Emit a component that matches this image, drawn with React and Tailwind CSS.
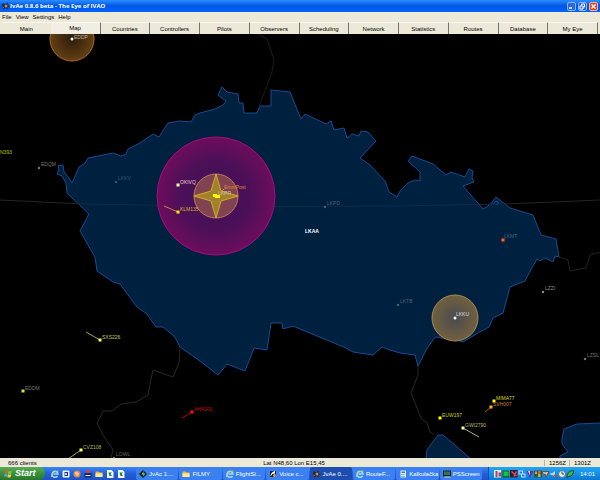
import React, { useState } from 'react';

const TABS = ['Main', 'Map', 'Countries', 'Controllers', 'Pilots', 'Observers', 'Scheduling', 'Network', 'Statistics', 'Routes', 'Database', 'My Eye'];

const LKAA_BORDER =
  '58,166 63,165 64,172 68,177 72,183 79,167 85,163 88,158 113,153 121,156 126,154 128,149 140,143 153,134 159,137 168,123 180,121 191,122 195,115 200,113 ' +
  '215,109 223,105 226,101 218,95 222,87 227,92 238,94 239,103 243,103 244,113 257,113 260,106 271,106 271,90 290,92 301,119 305,114 326,124 331,121 334,130 344,128 347,138 352,134 359,136 361,131 368,132 376,141 360,158 370,165 385,181 389,192 397,197 ' +
  '400,191 408,183 415,180 420,181 420,172 408,161 412,156 433,164 446,175 451,172 465,177 469,169 473,171 472,178 474,182 463,186 483,209 491,204 496,197 505,204 510,208 533,215 541,235 556,239 559,257 555,256 553,262 545,258 540,261 537,259 529,273 525,281 510,287 ' +
  '503,313 493,318 489,327 478,333 463,342 457,340 435,337 426,350 418,366 415,355 400,353 390,350 382,347 373,355 353,352 346,348 293,326 283,329 282,323 271,323 267,350 254,348 245,371 227,364 218,375 200,361 ' +
  '180,347 175,337 163,327 156,327 147,314 137,307 120,284 113,282 97,271 95,257 80,231 89,214 67,193 66,183 62,176 57,174 59,170';

const AIRPORTS = [
  { id: 'EDQM', x: 39, y: 168, color: '#77776f' },
  { id: 'LKKV', x: 116, y: 182, color: '#3b5870' },
  { id: 'LKPD', x: 325, y: 207, color: '#4b6475' },
  { id: 'LKTB', x: 398, y: 305, color: '#4b6475' },
  { id: 'LZZI', x: 543, y: 292, color: '#8c8c8c' },
  { id: 'LZSL', x: 585, y: 359, color: '#777777' },
  { id: 'LOWL', x: 114, y: 458, color: '#666666' },
];

const AIRCRAFT = [
  { id: 'OKIVQ', x: 178, y: 185, color: '#ffff99', text: '#e8cfc0' },
  { id: 'KLM135', x: 178, y: 212, color: '#ffee00', text: '#d8ad28', tail: [164, 206], line: '#d08040' },
  { id: 'SXS226', x: 100, y: 340, color: '#ffff70', text: '#c8c850', tail: [86, 332], line: '#a0a060' },
  { id: 'EDDM', x: 23, y: 391, color: '#d8e820', text: '#777777' },
  { id: 'CVZ108', x: 81, y: 450, color: '#ffff70', text: '#b8b848', tail: [68, 459], line: '#a0a060' },
  { id: 'AHA001', x: 192, y: 412, color: '#ff1010', text: '#c80808', tail: [182, 418], line: '#b80808' },
  { id: 'MIMA77', x: 494, y: 401, color: '#ffff00', text: '#dada25' },
  { id: 'SVH007', x: 491, y: 407, color: '#ffb020', text: '#c58024', tail: [485, 412], line: '#a06018' },
  { id: 'EUW197', x: 440, y: 418, color: '#ffff00', text: '#cccc25' },
  { id: 'GWI2790', x: 463, y: 428, color: '#ffffa0', text: '#b8b868', tail: [479, 437], line: '#b0b070' },
];

const TASKS = [
  { label: 'JvAc 1....', icon: 'radar' },
  { label: 'FILMY', icon: 'folder' },
  { label: 'FlightSi...', icon: 'ie' },
  { label: 'Voice c...', icon: 'voice' },
  { label: 'JvAe 0....', icon: 'eye', active: true },
  { label: 'RouteF...', icon: 'ie' },
  { label: 'Kalkulačka', icon: 'calc' },
  { label: 'PSScreen', icon: 'screen' },
];

const QUICK_LAUNCH = ['ie', 'media', 'firefox', 'save', 'folder', 'page', 'page'];
const TRAY = ['people', 'green', 'red', 'network', 'shield', 'chart', 'bolt', 'audio', 'clock', 'leaf'];

function Icon({ name }) {
  return (
    <svg className="h-2 w-2 shrink-0" viewBox="0 0 16 16" aria-hidden="true">
      {name === 'ie' && (
        <>
          <path d="M13 12a6 6 0 1 1 1-4H5" fill="none" stroke="#9bdcf5" strokeWidth="3" />
          <path d="M1 14C1 8 7 2 15 2" fill="none" stroke="#d8c75a" strokeWidth="2" />
        </>
      )}
      {name === 'folder' && (
        <>
          <path d="M1 3h6l2 2h6v9H1z" fill="#e5bd4c" />
          <path d="M1 7h14v7H1z" fill="#ffe990" />
        </>
      )}
      {name === 'media' && (
        <>
          <rect x="1" y="1" width="14" height="14" rx="2" fill="#e8f1fa" />
          <path d="M5 4h7v8H5z" fill="#203978" />
          <circle cx="8" cy="8" r="2" fill="#fff" />
        </>
      )}
      {name === 'firefox' && (
        <>
          <circle cx="8" cy="8" r="7" fill="#de8848" />
          <path d="M3 5q6-4 9 2-1 6-6 4" fill="#f4c79c" />
        </>
      )}
      {name === 'save' && (
        <>
          <path d="M5 0h7v7H5z" fill="#d94432" />
          <path d="M1 6h14v9H1z" fill="#13276b" />
          <path d="M3 10h10v2H3z" fill="#eee" />
        </>
      )}
      {name === 'page' && (
        <>
          <path d="M2 0h9l4 4v12H2z" fill="#f2f8f2" />
          <path d="M5 5h7l-3 3 3 4H7z" fill="#187a58" />
        </>
      )}
      {name === 'radar' && (
        <>
          <path d="M8 0l8 8-8 8-8-8z" fill="#0c1c18" />
          <path d="M9 2L5 9h4l-2 5 6-7H9z" fill="#8bd08b" />
        </>
      )}
      {name === 'voice' && (
        <>
          <path d="M2 2h12v12H2z" fill="#162231" />
          <path d="M3 13Q3 4 12 2v5l-5 1z" fill="#fff" />
          <circle cx="11" cy="11" r="3" fill="#d7a557" />
        </>
      )}
      {name === 'eye' && (
        <>
          <path d="M2 2l4 3 5-4v5l5 3-5 1 1 5-5-3-5 4 1-6-3-3z" fill="#25242e" />
          <circle cx="8" cy="8" r="3" fill="#c58c55" />
          <circle cx="3" cy="11" r="1" fill="#e2651f" />
        </>
      )}
      {name === 'calc' && (
        <>
          <rect x="3" y="1" width="11" height="14" fill="#e3edf5" />
          <path d="M5 3h7v3H5zM5 8h2v2H5zM9 8h2v2H9zM5 12h2v2H5zM9 12h2v2H9z" fill="#4877a9" />
        </>
      )}
      {name === 'screen' && (
        <>
          <rect y="1" width="16" height="12" fill="#192431" />
          <path d="M2 3h12v7H2z" fill="#37734c" />
          <path d="M3 13h12v2H3z" fill="#d4d7b0" />
        </>
      )}
      {name === 'people' && (
        <>
          <rect width="14" height="15" fill="#eee3e7" />
          <path d="M3 2h4v12H3zM9 5h5v8H9z" fill="#a04a68" />
        </>
      )}
      {name === 'green' && (
        <>
          <rect x="1" y="1" width="13" height="14" fill="#0c5c30" />
          <rect x="3" y="3" width="10" height="9" fill="#18c830" />
        </>
      )}
      {name === 'red' && (
        <>
          <rect width="15" height="15" fill="#351c34" />
          <path d="M3 3l10 9M13 3l-5 10" stroke="#d54d55" strokeWidth="3" />
        </>
      )}
      {name === 'network' && (
        <>
          <path d="M1 1h9v8H1zM6 7h9v8H6z" fill="#bdddf7" />
          <path d="M3 3h5v4H3zM8 9h5v4H8z" fill="#3276cb" />
        </>
      )}
      {name === 'shield' && (
        <>
          <path d="M1 2h14L8 16z" fill="#64328c" />
          <path d="M4 2h4v9z" fill="#efc5e5" />
        </>
      )}
      {name === 'chart' && (
        <>
          <path d="M0 1h16v14H0z" fill="#34563e" />
          <path d="M2 3h4v5H2zM8 7h5v7H8z" fill="#c3ad48" />
          <path d="M8 2h5v4H8z" fill="#d05d4a" />
        </>
      )}
      {name === 'bolt' && <path d="M1 3h13l-6 12-1-6-6-1z" fill="#c8b8a6" stroke="#66504b" strokeWidth="2" />}
      {name === 'audio' && (
        <>
          <path d="M1 6h4l5-4v12l-5-4H1z" fill="#d0cfd0" />
          <path d="M8 10l7 5" stroke="#be443c" strokeWidth="3" />
        </>
      )}
      {name === 'clock' && (
        <>
          <circle cx="8" cy="8" r="7" fill="#e0edf0" stroke="#55778a" strokeWidth="2" />
          <path d="M8 3v5h4" fill="none" stroke="#224455" strokeWidth="2" />
        </>
      )}
      {name === 'leaf' && <path d="M2 15C2 5 8 1 15 1q0 11-9 12z" fill="#4fad4e" stroke="#17502e" strokeWidth="2" />}
    </svg>
  );
}

function TitleBar() {
  return (
    <header className="flex h-3 shrink-0 items-center bg-linear-to-b from-[#2b8dff] via-[#0055e5] to-[#0064ff] px-[2px]">
      <Icon name="eye" />
      <h1 className="flex-1 font-['Open_Sans',sans-serif] text-[6px] leading-none font-bold text-white">IvAe 0.8.6 beta - The Eye of IVAO</h1>
      <div className="flex gap-[2px]">
        <button aria-label="Minimize" className="flex size-[9px] items-center justify-center rounded-[2px] border border-[#8cb5ff] bg-[#2868e8]">
          <svg className="size-[7px]" viewBox="0 0 7 7"><path d="M1 5h3" stroke="#fff" strokeWidth="1.5" /></svg>
        </button>
        <button aria-label="Restore" className="flex size-[9px] items-center justify-center rounded-[2px] border border-[#8cb5ff] bg-[#2868e8]">
          <svg className="size-[7px]" viewBox="0 0 7 7"><path d="M2.5 2.5v-1.5h3v3H4M1 3h3v3H1z" fill="none" stroke="#fff" /></svg>
        </button>
        <button aria-label="Close" className="flex size-[9px] items-center justify-center rounded-[2px] border border-[#efb19f] bg-[#e04a22]">
          <svg className="size-[7px]" viewBox="0 0 7 7"><path d="M1.5 1.5l4 4m0-4l-4 4" stroke="#fff" strokeWidth="1.3" /></svg>
        </button>
      </div>
    </header>
  );
}

function RadarMap() {
  return (
    <svg
      className="min-h-0 w-full flex-1 bg-black font-['Liberation_Sans',sans-serif] text-[5px]"
      viewBox="0 34 600 424"
      preserveAspectRatio="xMidYMid slice"
      role="img"
      aria-label="Radar map"
    >
      <defs>
        <radialGradient id="approach">
          <stop offset="0" stopColor="#3c1058" />
          <stop offset="0.6" stopColor="#4c1058" />
          <stop offset="1" stopColor="#6d0c5c" />
        </radialGradient>
        <radialGradient id="tower">
          <stop offset="0" stopColor="#474b50" />
          <stop offset="1" stopColor="#72603f" />
        </radialGradient>
        <radialGradient id="towerDark">
          <stop offset="0" stopColor="#2c1c0c" />
          <stop offset="1" stopColor="#643f13" />
        </radialGradient>
      </defs>

      {/* controlled airspace */}
      <g fill="#00203f" stroke="#164c94" strokeWidth="1">
        <polygon points={LKAA_BORDER} />
        <polygon points="426,459 427,450 438,435 443,435 471,459" />
        <polygon points="601,423 577,424 564,429 562,438 562,444 568,452 560,456 560,459 601,459" />
        <path d="M493 204l3-3 3 2-3 2" fill="none" />
      </g>

      {/* country borders */}
      <g fill="none" stroke="#292929" strokeWidth="1">
        <path d="M258 34l9 5 7 21-2 12-13 35" stroke="#1d1d18" />
        <path d="M180 347l-1 16-6 14-20-7-3 14-2 11-12 7-15 2-9 7h-9l-6 12 6 12 10 15-2 8" />
        <path d="M418 366v9l-7 18 10 25 6 5 3 9 4 3" />
        <path d="M559 257l9 3 2 11 16-3 4-13 10-3" stroke="#222222" />
        <path d="M0 200l84 4" stroke="#252525" />
        <path d="M84 204Q300 209 505 204" stroke="#102c48" />
        <path d="M505 204l95-4" stroke="#252525" />
      </g>

      <circle cx="72" cy="39" r="22" fill="url(#towerDark)" stroke="#a56b25" />
      <circle cx="72" cy="39" r="1.5" fill="#fff" />
      <text x="74" y="39" fill="#b8b0a0">EDDP</text>

      <circle cx="216" cy="196" r="59" fill="url(#approach)" stroke="#a60c7d" />
      <circle cx="216" cy="196" r="22" fill="#80434f" stroke="#c37d58" />
      <path d="M216 174l5 17 17 5-17 5-5 17-5-17-17-5 17-5z" fill="#a1822b" stroke="#cfac2b" />
      <text x="218" y="195" fill="#c8c4bc">LKPR</text>
      <text x="224" y="189" fill="#df8830">EmmPost</text>
      <path d="M220 193l4-4" stroke="#e28b28" />
      <path d="M213 194h4v1h3v3h-5v-1h-2z" fill="#ffff00" />

      <circle cx="455" cy="318" r="23" fill="url(#tower)" stroke="#a88b4e" />
      <circle cx="455" cy="318" r="1.5" fill="#fff" />
      <text x="456" y="316" fill="#ddd">LKKU</text>

      {AIRPORTS.map((airport) => (
        <g key={airport.id} fill={airport.color}>
          <circle cx={airport.x} cy={airport.y} r="1.2" />
          <text x={airport.x + 2} y={airport.y - 2}>{airport.id}</text>
        </g>
      ))}

      <circle cx="503" cy="240" r="2" fill="#e0703c" stroke="#7c2017" />
      <text x="504" y="238" fill="#4b6475">LKMT</text>

      {AIRCRAFT.map((plane) => (
        <g key={plane.id}>
          {plane.tail && (
            <line x1={plane.x} y1={plane.y} x2={plane.tail[0]} y2={plane.tail[1]} stroke={plane.line} strokeWidth="1" />
          )}
          <rect x={plane.x - 1.5} y={plane.y - 1.5} width="3" height="3" fill={plane.color} />
          <text x={plane.x + 2} y={plane.y - 1} fill={plane.text}>{plane.id}</text>
        </g>
      ))}

      <text x="0" y="154" fill="#b8c820">N393</text>
      <text x="312" y="233" fill="#fff" textAnchor="middle" className="font-bold">LKAA</text>
    </svg>
  );
}

function Taskbar() {
  return (
    <footer className="flex h-[13px] shrink-0 items-stretch bg-linear-to-b from-[#3b86f5] via-[#245edb] to-[#1f52c5] font-['Liberation_Sans',sans-serif] text-[6px] leading-none text-white">
      <button className="flex w-[45px] shrink-0 items-center gap-[2px] rounded-r-md bg-linear-to-b from-[#58ad58] via-[#37913a] to-[#28752d] pl-1 text-[9px] font-bold italic">
        <svg className="h-[9px] w-[9px]" viewBox="0 0 16 16" aria-hidden="true">
          <path d="M2 3q3-2 5 0L6 8Q4 6 1 8z" fill="#ed5b2b" />
          <path d="M8 3q3 2 6 0l-1 5q-3 2-6 0z" fill="#80c63b" />
          <path d="M1 9q3-2 5 0l-1 5q-2-2-5 0z" fill="#5b9cf5" />
          <path d="M7 9q3 2 6 0l-1 5q-3 2-6 0z" fill="#f6cf3a" />
        </svg>
        Start
      </button>
      <div className="flex shrink-0 items-center gap-[3px] px-[6px]">
        {QUICK_LAUNCH.map((name, i) => (
          <Icon key={i} name={name} />
        ))}
      </div>
      <div className="flex min-w-0 flex-1 gap-[1px] pr-[6px] pl-[5px]">
        {TASKS.map((task) => (
          <button
            key={task.label}
            className={`flex min-w-0 flex-1 items-center gap-[2px] rounded-[2px] pl-[3px] whitespace-nowrap ${
              task.active ? 'bg-[#1e4db0]' : 'bg-[#3a80f0]'
            }`}
          >
            <Icon name={task.icon} />
            {task.label}
          </button>
        ))}
      </div>
      <div className="flex shrink-0 items-center border-l border-[#1749a8] bg-linear-to-b from-[#23a6f2] via-[#1390e8] to-[#0d78d0] pr-[5px] pl-[5px]">
        {TRAY.map((name) => (
          <Icon key={name} name={name} />
        ))}
        <span className="pl-[6px]">14:01</span>
      </div>
    </footer>
  );
}

function App() {
  const [tab, setTab] = useState('Map');

  return (
    <div className="flex h-screen flex-col overflow-hidden bg-[#ece9d8] font-['Liberation_Sans',sans-serif] text-[6px] leading-none text-black">
      <TitleBar />
      <nav className="flex h-[10px] shrink-0 items-center gap-[4px] px-[2px]">
        {['File', 'View', 'Settings', 'Help'].map((item) => (
          <button key={item}>{item}</button>
        ))}
      </nav>
      <div role="tablist" className="flex h-3 shrink-0 px-[2px]">
        {TABS.map((name) => (
          <button
            key={name}
            role="tab"
            aria-selected={tab === name}
            onClick={() => setTab(name)}
            className={`flex-1 border-t border-t-[#faf9f3] ${
              tab === name ? 'border-r border-r-[#77756b] bg-[#f1efe3] pb-[2px]' : name === 'Main' ? 'bg-[#ece9d8]' : 'border-r border-r-[#77756b] bg-[#ece9d8]'
            }`}
          >
            {name}
          </button>
        ))}
      </div>
      <RadarMap />
      <div className="flex h-[9px] shrink-0 items-center">
        <span className="flex-1 pl-2">666 clients</span>
        <span className="pr-[14px]">Lat N48,60 Lon E15,45</span>
        <div className="flex flex-1 justify-end pr-[6px]">
          <span className="border-l border-[#b5b2a3] pr-[3px] pl-[4px]">1256Z</span>
          <span className="border-l border-[#b5b2a3] pr-[3px] pl-[4px]">1301Z</span>
        </div>
      </div>
      <Taskbar />
    </div>
  );
}

export default App;
